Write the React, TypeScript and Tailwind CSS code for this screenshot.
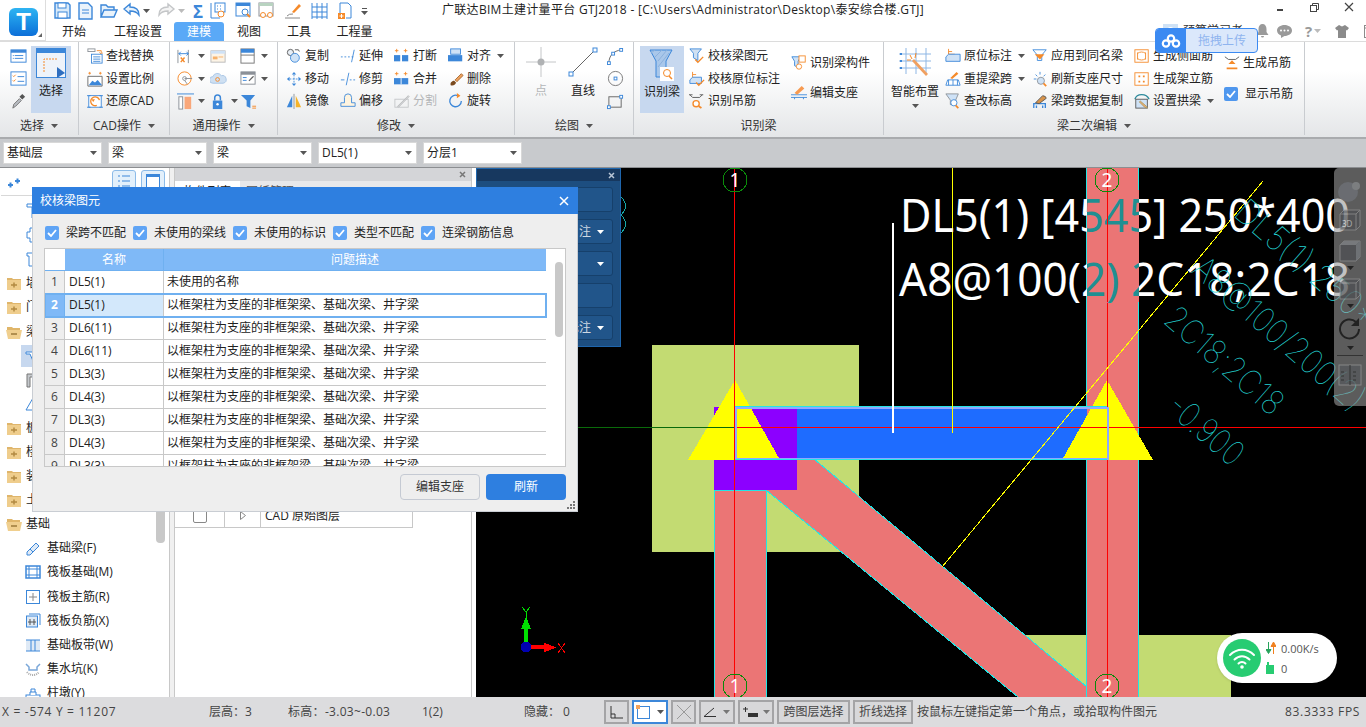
import React from "react";

const B = "#3c87d9", O = "#f58a2a", G = "#8b9097", L = "#cfe2f6";

const icons: Record<string, React.ReactNode> = {
  list1: <><rect x="1" y="2" width="16" height="13" fill="#fff" stroke={B} /><rect x="1" y="2" width="16" height="3" fill={B} /><path d="M5 8h9M5 11h9" stroke={B} /><path d="M3 8h1M3 11h1" stroke={B} /></>,
  list2: <><rect x="1" y="2" width="16" height="14" fill="#fff" stroke={B} /><path d="M3 6l1 1 2-2M3 11l1 1 2-2" stroke={O} fill="none" /><path d="M8 7h7M8 12h7" stroke={B} /></>,
  dropper: <><path d="M3 16l1-4 6-6 2 2-6 6z" fill="#b8bcc2" stroke="#777" /><path d="M10 4l3-3 3 3-3 3z" fill="#555" /></>,
  find: <><rect x="1" y="1" width="8" height="3" fill="none" stroke={G} /><path d="M11 3h5v3M14 5l2 2 2-2" stroke={O} fill="none" /><rect x="5" y="7" width="12" height="10" fill="#fff" stroke={B} /><path d="M7 10h8M7 12.500h8M7 15h8" stroke={B} /></>,
  ratio: <><path d="M1 6h16v11H1z" fill="#fff" stroke="#666" /><path d="M2 16l4-5 3 2 3-3 5 6z" fill={B} /><path d="M3 1v3M1.500 2.500h3M15 1v3M13.500 2.500h3" stroke={O} /></>,
  restore: <><rect x="2" y="3" width="14" height="13" fill="#fff" stroke={B} /><path d="M0 3h4M0 16h4M14 3h4M14 16h4" stroke={B} /><path d="M14 8a5 5 0 1 0-3 6" stroke={O} fill="none" strokeWidth="1.500" /><path d="M5 7l2 3 2-3z" fill={O} /></>,
  ext: <><path d="M1 2v14M12 2v14" stroke={G} /><path d="M2 6h10M2 6l2-2M2 6l2 2M12 6l-2-2M12 6l-2 2" stroke={B} fill="none" /><path d="M4 10l4 5M8 10l-4 5" stroke={O} strokeWidth="1.500" /></>,
  panel: <><rect x="1" y="3" width="15" height="12" fill="#fdf4e6" stroke="#bbb" /><path d="M1 3h15v3H1z" fill={L} /><rect x="3" y="9" width="5" height="3" fill="#f7b26c" /><rect x="9" y="9" width="5" height="1" fill="#f7b26c" /></>,
  win: <><rect x="1" y="1" width="14" height="15" fill="#fff" stroke="#777" /><rect x="1" y="1" width="14" height="4" fill={B} /><rect x="1" y="7" width="14" height="1" fill="#777" /></>,
  clock: <><circle cx="8" cy="9" r="7" fill="#fff" stroke={O} /><circle cx="8" cy="9" r="2" fill="none" stroke={G} /><path d="M8 9h8" stroke={G} /><path d="M8 11l3 4" stroke={G} /></>,
  cloud: <><path d="M3 14a3.500 3.500 0 0 1 0-7 5 5 0 0 1 9-1 4 4 0 0 1 2 8z" fill="#cfe0f2" stroke="#a8c6e6" /><circle cx="8" cy="10" r="2" fill="none" stroke={O} /></>,
  props: <><rect x="1" y="2" width="15" height="13" fill="#fff" stroke={G} /><rect x="1" y="2" width="15" height="3" fill={G} /><path d="M3 8h4M3 11h4" stroke={B} /><path d="M9 11l4-4 2-1-1 2-4 4z" fill="#666" /></>,
  col: <><path d="M0 1h18" stroke={B} /><rect x="2" y="4" width="4" height="13" fill="#fff" stroke={G} /><rect x="8" y="4" width="7" height="13" fill="#f9a77a" /></>,
  lock: <><path d="M5 8V5a3 3 0 0 1 6 0v3" fill="none" stroke={B} strokeWidth="1.600" /><rect x="3" y="8" width="10" height="9" fill={B} /><circle cx="8" cy="12" r="1.300" fill="#fff" /></>,
  funnel: <><path d="M1 2h15l-5 6v8l-4-2V8z" fill={B} /><path d="M13 14h4M13 16h4" stroke={O} /></>,
  copy: <><circle cx="5" cy="5" r="3.500" fill="#e8eef5" stroke="#555" /><circle cx="10" cy="11" r="5" fill={L} stroke={B} /><path d="M10 2h4l1 2" stroke="#555" fill="none" /></>,
  extend: <path d="M1 10h2M5 10h2M9 10h2M13 10h2M16 2l-3 14" stroke={B} fill="none" />,
  brk: <><path d="M3 1v4M1 3h4M13 1v4M11 3h4" stroke={O} /><rect x="0" y="8" width="7" height="7" fill={B} /><rect x="9" y="8" width="7" height="7" fill={B} /></>,
  merge: <><path d="M3 1v4M1 3h4M13 1v4M11 3h4" stroke={O} /><rect x="0" y="8" width="16" height="7" fill={B} /><path d="M8 8v7" stroke="#fff" /></>,
  align: <><rect x="3" y="1" width="11" height="6" fill={L} stroke={B} /><rect x="0" y="8" width="16" height="7" fill={B} /></>,
  move: <><path d="M9 1l2.500 3h-5zM9 17l2.500-3h-5zM1 9l3 2.500v-5zM17 9l-3 2.500v-5z" fill={B} /><path d="M9 4v10M4 9h10" stroke={B} strokeDasharray="2 1.500" /></>,
  trim: <path d="M1 10h4M11 10h2M15 10h2M10 2l-3 14" stroke={B} fill="none" />,
  del: <><path d="M3 16c-1-3 2-5 4-5l2 2c0 2-3 4-6 3z" fill="#7a4a1e" /><path d="M8 10l7-7 2 2-7 7z" fill="#eda15e" stroke="#a5652c" /></>,
  mirror: <><path d="M7 3v13H1z" fill={B} /><path d="M9 1v17" stroke={G} /><path d="M11 3v13h6z" fill="#f5b32a" /></>,
  offset: <path d="M1 15v-4h4V5a4 4 0 0 1 8 0v6h4v4z" fill="#fff4df" stroke={B} />,
  split: <><rect x="1" y="7" width="15" height="9" fill="none" stroke="#c4c6c8" /><path d="M4 15L16 3l1 1L5 16z" fill="#d8d9da" stroke="#b8babc" /></>,
  rotate: <><path d="M15 9a6.500 6.500 0 1 1-4-6" fill="none" stroke={B} strokeWidth="1.500" /><path d="M10 0l4 3-4 3z" fill={O} /></>,
  arc: <><path d="M2 16C2 8 7 3 15 2" fill="none" stroke="#666" /><rect x="0.500" y="14.500" width="3" height="3" fill="#fff" stroke={B} /><rect x="13.500" y="0.500" width="3" height="3" fill="#fff" stroke={B} /><rect x="5" y="4.500" width="3" height="3" fill="#fff" stroke={B} /></>,
  circle: <><circle cx="9" cy="9" r="7.500" fill="none" stroke="#777" /><rect x="7.500" y="7.500" width="3" height="3" fill="#fff" stroke={B} /></>,
  rect: <><rect x="2" y="4" width="13" height="11" fill="none" stroke="#666" /><rect x="0.500" y="13.500" width="3" height="3" fill="#fff" stroke={B} /><rect x="13.500" y="2.500" width="3" height="3" fill="#fff" stroke={B} /></>,
  chk1: <><path d="M1 1h13l-4 5v8l-5-3V6z" fill="#cfe0f2" stroke={B} /><path d="M7 13l3 3 6-6" stroke={O} fill="none" strokeWidth="1.500" /></>,
  chk2: <><path d="M4 1v7h8M4 4h4" stroke={O} fill="none" /><path d="M1 10l3-3h10v7H1z" fill={L} stroke={B} /><path d="M8 13l3 3 6-6" stroke={O} fill="none" strokeWidth="1.500" /></>,
  hang: <><path d="M1 2l3 3h8l3-3M0 2h4M12 2h4" stroke="#555" fill="none" /><circle cx="8" cy="12" r="3.500" fill="#fff" stroke={O} strokeWidth="1.500" /><path d="M11 15l3 2" stroke={O} strokeWidth="2" /></>,
  beamc: <><path d="M1 2h10l-3 5v7l-4-2V7z" fill={L} stroke={B} /><rect x="9" y="1" width="7" height="7" fill="#fff" stroke={O} /><circle cx="9" cy="13" r="3" fill="#fff" stroke={O} /></>,
  seat: <><path d="M0 11h18M0 14h18" stroke={B} /><path d="M4 16v-2M14 16v-2" stroke={B} /><path d="M4 9l8-8 3 3-8 7z" fill="#f79a50" /></>,
  apply: <><path d="M1 2h15l-5 6v6H6V8z" fill="#fff" stroke={B} /><path d="M3 7h11l-5 6z" fill={O} /></>,
  ori: <><path d="M4 1v6h7M4 4h4" stroke={O} fill="none" /><path d="M1 10l3-3h13v8H1z" fill={L} stroke={B} /></>,
  refetch: <><path d="M3 10h12l2 6H1z" fill="#fff" stroke={B} /><path d="M4 16v-6M9 16v-6M14 16v-6" stroke={B} /><path d="M6 8l7-7 2 2-7 6z" fill={O} /></>,
  elev: <><path d="M1 1h14l-3 7v5H6V8z" fill={L} stroke={G} /><circle cx="10" cy="11" r="3.500" fill="#fff" stroke={B} /><path d="M12 14l3 3" stroke={O} strokeWidth="2" /></>,
  fresh: <><circle cx="10" cy="11" r="4" fill={L} stroke={G} /><path d="M13 14l3 3" stroke={O} strokeWidth="2" /><path d="M9 1v3M2 9h3M4 4l2 2M15 4l-2 2" stroke={B} /></>,
  brush: <><path d="M2 17v-5h13v5M5 17v-3M12 17v-3" fill="none" stroke={B} strokeWidth="1.500" /><path d="M4 11l8-8 3 1 1 2-8 6z" fill="#d8934a" stroke="#555" /></>,
  side: <><rect x="1" y="2" width="15" height="14" fill="#fff" stroke={O} /><path d="M4 6c3-2 6-2 9 0M4 12c3 2 6 2 9 0M4 5v8M13 5v8" stroke={O} fill="none" /></>,
  erect: <><rect x="1" y="2" width="15" height="14" fill="#fff" stroke={O} /><path d="M5 5h2v2H5zM10 5h2v2h-2zM5 11h2v2H5zM10 11h2v2h-2z" fill={O} /></>,
  arch: <><path d="M1 7C3 0 14 0 17 7" fill="none" stroke="#2d8a9c" strokeWidth="1.500" /><rect x="2" y="7" width="13" height="10" fill={L} stroke="#555" /><path d="M7 9l7 6 1 2-3-1-6-6z" fill="#f0b070" stroke="#a96" /></>,
  hang2: <><path d="M1 2l4 3h8l4-3" stroke="#555" fill="none" /><path d="M5 10l4-4 4 4zM3 14h12v2H3z" fill={O} /></>,
  save: <><path d="M1 1h13l2 2v13H1z" fill="#d9eaf9" stroke={B} strokeWidth="1.400" /><rect x="4" y="1" width="8" height="5" fill="#fff" stroke={B} /><rect x="4" y="10" width="9" height="6" fill="#fff" stroke={B} /></>,
  doc: <><path d="M2 1h9l4 4v12H2z" fill="#eaf3fb" stroke={B} strokeWidth="1.400" /><path d="M5 8h7M5 11h7" stroke={B} /></>,
  open: <path d="M1 15V3h5l2 2h6v3M1 15l3-7h13l-3 7z" fill="#eaf3fb" stroke={B} strokeWidth="1.400" />,
  undo: <path d="M1 7l6-5v3c5 0 9 2 9 8-2-3-5-4-9-4v3z" fill="#eaf3fb" stroke={B} strokeWidth="1.400" />,
  redo: <path d="M16 7l-6-5v3c-5 0-9 2-9 8 2-3 5-4 9-4v3z" fill="#f4f4f4" stroke="#c4c6c8" strokeWidth="1.400" />,
  q1: <><path d="M1 1v15h9" fill="none" stroke={B} /><rect x="5" y="1" width="10" height="9" fill="#fff" stroke={B} /><path d="M7 4h1M10 4h1M7 7h1M10 7h1" stroke={B} /><circle cx="11" cy="12" r="3" fill="#fff" stroke={O} /></>,
  q2: <><rect x="1" y="1" width="14" height="13" fill="#fff" stroke={B} /><rect x="1" y="1" width="14" height="3" fill={B} /><circle cx="10" cy="10" r="3" fill="#fff" stroke={B} /><path d="M12 12l3 3" stroke={O} strokeWidth="2" /></>,
  q3: <><rect x="1" y="1" width="14" height="13" fill="#fff" stroke={G} /><rect x="1" y="1" width="14" height="3" fill="#b8d3c0" /><circle cx="5" cy="13" r="2.500" fill="#fff" stroke={O} /><circle cx="12" cy="13" r="2.500" fill="#fff" stroke={O} /></>,
  q4: <><path d="M8 10l7-8 2 2-7 7z" fill={O} /><path d="M1 16h15" stroke="#888" /><path d="M3 14a6 4 0 0 1 6-2" stroke="#888" fill="none" /></>,
  q5: <path d="M1 1v16M16 1v16M1 5h15M1 10h15M1 15h15M6 1v16M11 1v16" stroke={B} fill="none" />,
  q6: <><path d="M3 12V1h8l3 3v12H9" fill="#fff" stroke={B} /><rect x="1" y="11" width="7" height="6" fill={O} /><path d="M4.500 12v4M2.500 14h4" stroke="#fff" /></>,
};

function Ic({ n, s = 18 }: { n: string; s?: number }) {
  return <svg width={s} height={s} viewBox="0 0 18 18" className="shrink-0 block">{icons[n]}</svg>;
}

function Caret({ c = "#555" }: { c?: string }) {
  return <svg width="7" height="4" viewBox="0 0 7 4" className="shrink-0"><path d="M0 0h7L3.500 4z" fill={c} /></svg>;
}

function Item({ n, t, caret, gray, w = "" }: { n: string; t: string; caret?: boolean; gray?: boolean; w?: string }) {
  return (
    <div className={"flex items-center h-[22.5px] whitespace-nowrap " + w}>
      <div className="w-[19px] shrink-0"><Ic n={n} s={16} /></div>
      <span className={gray ? "text-[#b4b6b8]" : "text-[#222]"}>{t}</span>
      {caret && <span className="ml-[6px] flex"><Caret /></span>}
    </div>
  );
}

function Group({ cls, label, caret = true, children }: { cls: string; label: string; caret?: boolean; children: React.ReactNode }) {
  return (
    <div className={"flex flex-col shrink-0 border-r border-[#c9ccd0] mb-[2px] " + cls}>
      <div className="flex h-[71px] mt-[3px] shrink-0">{children}</div>
      <div className="flex items-center justify-center gap-[7px] h-[19px] shrink-0 text-[#333]">
        <span>{label}</span>{caret && <Caret />}
      </div>
    </div>
  );
}

function Mini({ n, caret }: { n: string; caret?: boolean }) {
  return (
    <div className="flex items-center h-[22.5px] gap-[4px]"><Ic n={n} s={17} />{caret && <Caret />}</div>
  );
}

function Folder({ open }: { open?: boolean }) {
  return (
    <svg width="16" height="14" viewBox="0 0 16 14" className="shrink-0">
      {open ? <><path d="M1 2h5l1 1h7v3H1z" fill="#e0b66a" /><path d="M0 5h16l-2 9H2z" fill="#f0cf8e" /><path d="M5 9h6" stroke="#9c7a3a" strokeWidth="1.500" /></>
        : <><path d="M1 2h5l1 1h8v2H1z" fill="#dfb56b" /><rect x="1" y="4" width="14" height="10" fill="#efcd8c" /><path d="M5 9h6M8 6.500v5" stroke="#b38a42" strokeWidth="1.500" /></>}
    </svg>
  );
}

const sub: Record<string, React.ReactNode> = {
  a: <path d="M2 1h12v3H9v11H7V4H2z" fill="#fff" stroke={B} />,
  b: <path d="M5 1h6v4h3v6h-3v4H5v-4H2V5h3z" fill="#fff" stroke={B} />,
  c: <path d="M2 2h12v3h-2v10H4V5H2z" fill="#fff" stroke={B} />,
  d: <><path d="M1 4h14v2h-4L8 13 5 6H1z" fill="#fff" stroke={B} /></>,
  e: <path d="M2 2h12v3H5v10H2z" fill="#c4c8cc" stroke="#777" />,
  f: <path d="M8 2l7 12H1z" fill="#fff" stroke={B} />,
  g: <><path d="M2 12L11 3l3 3-9 9H2z" fill="#dfeaf6" stroke={B} /><path d="M5 9l3 3" stroke={B} /></>,
  h: <><rect x="1" y="2" width="14" height="12" fill="#fff" stroke={B} strokeWidth="1.500" /><path d="M1 5h14M1 11h14M4 2v12M12 2v12" stroke={B} /></>,
  i: <><rect x="1.500" y="1.500" width="13" height="13" fill="#fff" stroke={B} /><path d="M8 4v8M4 8h8" stroke="#888" /></>,
  j: <><rect x="1.500" y="3" width="11" height="11" fill="#dfeaf6" stroke={B} /><path d="M4 1h11v11" fill="none" stroke={B} /><path d="M5 6v6M9 6v6M3 9h8" stroke="#555" /></>,
  k: <><rect x="1" y="3" width="14" height="11" fill="#dfeaf6" /><path d="M1 3h14M1 14h14M6 3v11M10 3v11" stroke={B} /></>,
  l: <><path d="M1 3l3 3v3h8V6l3-3" fill="none" stroke="#7aa7d9" strokeWidth="1.500" /><path d="M2 11c3 4 9 4 12 0" fill="none" stroke="#aaa" strokeDasharray="1 1" strokeWidth="2" /></>,
  m: <><rect x="1" y="10" width="14" height="4" fill="#fff" stroke={B} /><path d="M5 10V7h6v3M6 7V4h4v3" fill="#fff" stroke={B} /></>,
};

function TreeFolder({ t, open }: { t: string; open?: boolean }) {
  return <div className="flex items-center h-[24.1px] pl-[5px] gap-[4px] whitespace-nowrap"><Folder open={open} /><span>{t}</span></div>;
}
function TreeSub({ n, t, sel }: { n: string; t: string; sel?: boolean }) {
  return (
    <div className="flex items-center h-[24.1px] whitespace-nowrap pl-[20px]">
      <div className={"flex items-center h-[22px] pl-[4px] pr-[6px] gap-[6px] " + (sel ? "bg-[#c7d8ef]" : "")}>
        <svg width="16" height="16" viewBox="0 0 16 16" className="shrink-0">{sub[n]}</svg><span>{t}</span>
      </div>
    </div>
  );
}

const rows = [
  ["DL5(1)", "未使用的名称"],
  ["DL5(1)", "以框架柱为支座的非框架梁、基础次梁、井字梁"],
  ["DL6(11)", "以框架柱为支座的非框架梁、基础次梁、井字梁"],
  ["DL6(11)", "以框架柱为支座的非框架梁、基础次梁、井字梁"],
  ["DL3(3)", "以框架柱为支座的非框架梁、基础次梁、井字梁"],
  ["DL4(3)", "以框架柱为支座的非框架梁、基础次梁、井字梁"],
  ["DL3(3)", "以框架柱为支座的非框架梁、基础次梁、井字梁"],
  ["DL4(3)", "以框架柱为支座的非框架梁、基础次梁、井字梁"],
  ["DL3(3)", "以框架柱为支座的非框架梁、基础次梁、井字梁"],
];

function Check({ t, cls }: { t: string; cls: string }) {
  return (
    <div className={"flex items-center shrink-0 " + cls}>
      <span className="w-[14px] h-[14px] rounded-[2px] bg-[#5fa4f5] flex items-center justify-center shrink-0">
        <svg width="10" height="8" viewBox="0 0 10 8"><path d="M1 4l3 3 5-6" fill="none" stroke="#fff" strokeWidth="1.800" /></svg>
      </span>
      <span className="ml-[7px] whitespace-nowrap">{t}</span>
    </div>
  );
}

function Dialog() {
  return (
    <div className="absolute left-[32px] top-[187px] w-[546px] h-[325px] bg-[#eeeeee] border border-[#c9cdd3] border-t-0 flex flex-col text-[#222]">
      <div className="h-[27px] shrink-0 bg-[#2e7fe0] flex items-center justify-between pl-[8px] pr-[9px] text-white -mx-[1px]">
        <span>校核梁图元</span>
        <svg width="10" height="10" viewBox="0 0 10 10"><path d="M1 1l8 8M9 1L1 9" stroke="#fff" strokeWidth="1.500" /></svg>
      </div>
      <div className="h-[34px] shrink-0 flex items-center pl-[12px] pt-[4px]">
        <Check t="梁跨不匹配" cls="w-[88px]" />
        <Check t="未使用的梁线" cls="w-[100px]" />
        <Check t="未使用的标识" cls="w-[100px]" />
        <Check t="类型不匹配" cls="w-[88px]" />
        <Check t="连梁钢筋信息" cls="w-[100px]" />
      </div>
      <div className="ml-[11px] w-[522px] h-[219px] shrink-0 border border-[#c8c8c8] bg-white relative overflow-hidden">
        <div className="flex h-[22px] border-b border-[#6fb0f0] w-[501px]">
          <div className="w-[20px] bg-white" />
          <div className="w-[99px] bg-[#7fb9f7] text-white text-center leading-[21px] border-r border-[#6fb0f0]">名称</div>
          <div className="flex-1 bg-[#7fb9f7] text-white text-center leading-[21px]">问题描述</div>
        </div>
        {rows.map((r, i) => (
          <div key={i} className={"flex h-[23px] w-[501px] border-b leading-[22px] " + (i === 1 ? "border-[#6fb0f0] outline-2 -outline-offset-1 outline-[#6fb0f0] relative" : "border-[#c8c8c8]")}>
            <div className={"w-[20px] text-center border-r " + (i === 1 ? "bg-[#7fb9f7] text-white font-bold border-[#6fb0f0]" : "bg-[#eeeeee] border-[#c8c8c8] text-[#444]")}>{i + 1}</div>
            <div className={"w-[99px] pl-[4px] border-r border-[#c8c8c8] " + (i === 1 ? "bg-[#d3e8fb]" : "")}>{r[0]}</div>
            <div className="flex-1 pl-[3px]">{r[1]}</div>
          </div>
        ))}
        <div className="absolute left-[510px] top-[13px] w-[8px] h-[75px] rounded-[4px] bg-[#c8c8c8]" />
      </div>
      <div className="flex justify-end gap-[6px] pr-[11px] pt-[7px]">
        <button className="w-[80px] h-[26px] rounded-[4px] border border-[#c5cad3] text-[#333]">编辑支座</button>
        <button className="w-[80px] h-[26px] rounded-[4px] bg-[#2e7fe0] text-white">刷新</button>
      </div>
      <svg width="10" height="10" viewBox="0 0 10 10" className="absolute right-[1px] bottom-[1px]">
        <path d="M7 1h2v2H7zM4 4h2v2H4zM7 4h2v2H7zM1 7h2v2H1zM4 7h2v2H4zM7 7h2v2H7z" fill="#777" />
      </svg>
    </div>
  );
}

function BluePanel() {
  const cells = [["", false], ["注", true], ["", true], ["", false], ["标注", true]] as const;
  return (
    <div className="absolute left-[476px] top-[168px] w-[145px] h-[179px] bg-[#1d4e80] border border-[#1f66ad] text-[#cfd8e3] flex flex-col">
      <div className="h-[12px] bg-[#17385f] flex items-center justify-end pr-[5px] shrink-0">
        <svg width="7" height="7" viewBox="0 0 7 7"><path d="M1 1l5 5M6 1L1 6" stroke="#b9c6d6" strokeWidth="1.500" /></svg>
      </div>
      <div className="flex flex-col gap-[7px] pt-[6px] pl-[2px] pr-[7px]">
        {cells.map((c, i) => (
          <div key={i} className="h-[25px] rounded-[3px] border border-[#16406b] bg-[#21558a] flex items-center justify-end pr-[8px] gap-[6px]">
            <span>{c[0]}</span>{c[1] && <Caret c="#fff" />}
          </div>
        ))}
      </div>
    </div>
  );
}

function Axis({ x, y, t }: { x: number; y: number; t: string }) {
  return (
    <g>
      <circle cx={x} cy={y} r="12" fill="none" stroke="#0a8a0a" />
      <text x={x} y={y + 7} textAnchor="middle" fontSize="19" fill="#fff" fontFamily="'Noto Sans',sans-serif">{t}</text>
    </g>
  );
}

function Canvas() {
  const cs = "'Noto Sans',sans-serif";
  const l1 = "DL5(1) [4545] 250*400";
  const l2 = "A8@100(2) 2C18;2C18";
  return (
    <div className="relative flex-1 bg-black overflow-hidden">
      <svg width="890" height="529" viewBox="476 168 890 529" className="block" shapeRendering="crispEdges">
        <defs>
          <clipPath id="col2"><rect x="1087" y="167" width="52" height="530" /></clipPath>
        </defs>
        <rect x="652" y="345" width="207" height="207" fill="#c3db72" />
        <rect x="1026" y="635" width="205" height="62" fill="#c3db72" />
        <polygon points="797,459 814,459 1087,687 1087,697 1018,697 766,490 797,490" fill="#eb7575" />
        <path d="M814 459L1087 687M766 490L1018 697" stroke="#22e6e6" fill="none" />
        <rect x="714.500" y="490.500" width="52" height="207" fill="#eb7575" stroke="#22e6e6" />
        <rect x="1087" y="167" width="52" height="530" fill="#eb7575" />
        <path d="M1086.500 167V697M1138.500 167V697" stroke="#22e6e6" />
        <rect x="714" y="407" width="83" height="83" fill="#8c00ff" />
        <rect x="797" y="407" width="290" height="52" fill="#1e6cff" />
        <path d="M1087 697h82" stroke="#a000d0" />
        <polygon points="735,380 780,460 688,460" fill="#ffff00" />
        <polygon points="1107,380 1153,460 1062,460" fill="#ffff00" />
        <path d="M476 427.500H735" stroke="#0a6a0a" />
        <path d="M735 427.500H1366" stroke="#ff0000" />
        <path d="M734.500 167V697M1107.500 167V697" stroke="#ff0000" />
        <rect x="735.500" y="407.500" width="372" height="51" fill="none" stroke="#8fa8ff" strokeWidth="2" />
        <path d="M735 406.500H1107M735 459.500H1107" stroke="#22e6e6" />
        <path d="M952.500 167V433" stroke="#ffff00" />
        <path d="M893 223V433" stroke="#fff" strokeWidth="2" />
        <path d="M942 567L1263 181" stroke="#ffff00" />
        <g fontFamily={cs} fontSize="45" fill="#fff">
          <text x="900" y="232" textLength="450" lengthAdjust="spacingAndGlyphs">{l1}</text>
          <text x="899" y="296" textLength="451" lengthAdjust="spacingAndGlyphs">{l2}</text>
        </g>
        <g clipPath="url(#col2)" fontFamily={cs} fontSize="45" fill="#1f8f92">
          <rect x="1087" y="190" width="52" height="112" fill="#eb7575" />
          <text x="900" y="232" textLength="450" lengthAdjust="spacingAndGlyphs">{l1}</text>
          <text x="899" y="296" textLength="451" lengthAdjust="spacingAndGlyphs">{l2}</text>
          <path d="M1107.500 190V302" stroke="#ff0000" />
        </g>
        <g fontFamily="Inter,'Liberation Sans',sans-serif" fontSize="34" fontWeight="100" fill="#22d0d0">
          <text x="1232" y="215" textLength="232" lengthAdjust="spacingAndGlyphs" transform="rotate(41 1232 215)">DL5(1) 250*400</text>
          <text x="1190" y="272" textLength="215" lengthAdjust="spacingAndGlyphs" transform="rotate(41 1190 272)">A8@100/200(2)</text>
          <text x="1162" y="322" textLength="145" lengthAdjust="spacingAndGlyphs" transform="rotate(41 1162 322)">2C18;2C18</text>
          <text x="1165" y="410" textLength="88" lengthAdjust="spacingAndGlyphs" transform="rotate(41 1165 410)">-0.900</text>
        </g>
        <path d="M621 197c6 6 6 12 0 18c6 6 6 12 0 18" fill="none" stroke="#16a8a8" />
        <Axis x={735} y={180} t="1" />
        <Axis x={1107} y={180} t="2" />
        <Axis x={735} y={686} t="1" />
        <Axis x={1107} y={686} t="2" />
        <path d="M526 647V620" stroke="#00e000" strokeWidth="4" />
        <path d="M526 617l5 12h-10z" fill="#00e000" />
        <path d="M522 607l4 5 4-5M526 612v6" stroke="#00e000" fill="none" />
        <path d="M526 647H548" stroke="#ff0000" strokeWidth="4" />
        <path d="M556 647.500l-12 5v-10z" fill="#ff0000" />
        <path d="M558 643l7 10M565 643l-7 10" stroke="#ff0000" fill="none" />
        <circle cx="526" cy="647" r="5.500" fill="#0000b0" />
      </svg>

      <div className="absolute right-0 top-0 w-[32px] h-[238px] rounded-l-[5px] bg-[#999999]/60 flex flex-col items-center pt-[11px]">
        <svg width="26" height="24" viewBox="0 0 26 24" className="opacity-70"><circle cx="11" cy="13" r="10" fill="#70747a" /><circle cx="19" cy="7" r="4" fill="#8a8d90" /></svg>
        <svg width="24" height="24" viewBox="0 0 24 24" className="mt-[5px] opacity-60"><path d="M2 6l4-4h16v16l-4 4H2z" fill="#4a4d52" stroke="#999" /><path d="M2 6h16v16M18 6l4-4" fill="none" stroke="#999" /><text x="4" y="19" fontSize="8" fill="#ddd" fontFamily="'Noto Sans',sans-serif">3D</text></svg>
        <svg width="24" height="24" viewBox="0 0 24 24" className="mt-[7px] opacity-60"><path d="M2 6l4-4h16v16l-4 4H2z" fill="#4a4d52" stroke="#999" /><path d="M18 6l4-4v16l-4 4z" fill="#7b8087" /><path d="M2 6l4-4h16l-4 4z" fill="#8a8d92" /></svg>
        <span className="mt-[3px] flex"><Caret c="#222" /></span>
        <svg width="24" height="24" viewBox="0 0 24 24" className="mt-[7px] opacity-60"><path d="M2 6l4-4h16v16l-4 4H2z" fill="#4a4d52" stroke="#999" /><path d="M18 6v16M2 6h16l4-4" fill="none" stroke="#999" /></svg>
        <span className="mt-[3px] flex"><Caret c="#222" /></span>
        <svg width="24" height="24" viewBox="0 0 24 24" className="mt-[9px]"><path d="M21 12a9.500 9.500 0 1 1-3-7" fill="none" stroke="#222" strokeWidth="2" /><path d="M21 1v8h-8z" fill="#222" /></svg>
        <span className="mt-[5px] flex"><Caret c="#222" /></span>
        <div className="w-[26px] h-px bg-[#333] mt-[5px]" />
        <svg width="24" height="22" viewBox="0 0 24 22" className="mt-[8px] opacity-70"><rect x="1" y="1" width="22" height="20" fill="#55585c" stroke="#999" /><path d="M12 1v20M3 8h3M3 12h3M3 16h3M15 8h3M15 12h3M15 16h3" stroke="#222" /></svg>
      </div>

      <div className="absolute left-[741px] top-[465px] w-[120px] h-[50px] rounded-full bg-white shadow flex items-center pl-[6px] text-[#555]">
        <div className="w-[38px] h-[38px] rounded-full bg-[#27cc72] flex items-center justify-center shrink-0">
          <svg width="28" height="24" viewBox="0 0 28 24"><path d="M2 9c7-7 17-7 24 0M6.500 13.500c4.500-4.500 10.500-4.500 15 0M10.500 17.500c2-2 5-2 7 0" fill="none" stroke="#fff" strokeWidth="2" strokeLinecap="round" /><circle cx="14" cy="21" r="1.800" fill="#fff" /></svg>
        </div>
        <div className="ml-[5px] flex flex-col gap-[5px] text-[11px] leading-[15px]">
          <div className="flex items-center gap-[5px]"><svg width="10" height="12" viewBox="0 0 10 12"><path d="M2.500 0v8M0 7.500h5L2.500 11.500z" fill="#27a35c" stroke="#27a35c" /><path d="M7.500 12V3M5 4.500h5L7.500 0z" fill="#f08020" stroke="#f08020" /></svg><span>0.00K/s</span></div>
          <div className="flex items-center gap-[5px]"><svg width="9" height="12" viewBox="0 0 9 12"><rect x="0" y="3" width="8" height="9" fill="#27cc72" /><rect x="1" y="0" width="2" height="3" fill="#27cc72" /></svg><span className="ml-[1px]">0</span></div>
        </div>
      </div>
    </div>
  );
}

function StatBtn({ cls = "", children }: { cls?: string; children: React.ReactNode }) {
  return <div className={"h-[24px] border-2 flex items-center justify-center shrink-0 text-[#444] " + cls}>{children}</div>;
}
const SB = "border-[#a4a4a6] bg-[#d8d8da] ";

export default function App() {
  return (
    <div className="relative w-[1366px] h-[727px] overflow-hidden flex flex-col bg-white text-[12px] leading-[16px] text-[#222] [font-family:'Open_Sans','Noto_Sans_CJK_SC',sans-serif]">
      {/* title + tabs */}
      <div className="relative h-[41px] shrink-0 flex">
        <div className="w-[46px] h-[41px] border-r border-b border-[#dddddd] relative shrink-0">
          <div className="absolute left-[9px] top-[8px] w-[29px] h-[28px] rounded-[6px] bg-linear-to-b from-[#2fb4f2] to-[#0e6fd8] flex items-center justify-center text-white text-[24px] font-bold leading-none [font-family:'Liberation_Sans',sans-serif]">T</div>
          <span className="absolute right-[3px] bottom-[3px] w-0 h-0 border-l-[4px] border-l-transparent border-b-[4px] border-b-[#666]" />
        </div>
        <div className="flex-1 flex flex-col relative">
          <div className="h-[22px] flex items-center pl-[8px] gap-[5px]">
            <Ic n="save" /><Ic n="doc" /><Ic n="open" />
            <Ic n="undo" /><span className="-ml-[3px] flex"><Caret /></span>
            <span className="ml-[3px]"><Ic n="redo" /></span><span className="-ml-[3px] flex"><Caret c="#bbb" /></span>
            <span className="ml-[3px] text-[17px] leading-none font-bold text-[#3c87d9]">Σ</span>
            <span className="ml-[2px]"><Ic n="q1" /></span><span className="ml-[2px]"><Ic n="q2" /></span><Ic n="q3" /><span className="ml-[3px]"><Ic n="q4" /></span><span className="ml-[4px]"><Ic n="q5" /></span><span className="ml-[3px]"><Ic n="q6" /></span>
            <span className="ml-[1px] flex flex-col gap-[2px] items-center"><span className="w-[5px] h-px bg-[#555]" /><Caret /></span>
          </div>
          <div className="flex items-end h-[19px] text-[#222]">
            <div className="w-[56px] text-center leading-[19px]">开始</div>
            <div className="w-[72px] text-center leading-[19px]">工程设置</div>
            <div className="w-[50px] h-[19px] text-center leading-[19px] bg-[#5aa9f7] text-white rounded-t-[3px]">建模</div>
            <div className="w-[50px] text-center leading-[19px]">视图</div>
            <div className="w-[50px] text-center leading-[19px]">工具</div>
            <div className="w-[50px] text-center leading-[19px] pl-[11px]">工程量</div>
          </div>
        </div>
        <div className="absolute left-[442px] top-[2px] whitespace-nowrap text-[#222] tracking-[0.3px]">广联达BIM土建计量平台 GTJ2018 - [C:\Users\Administrator\Desktop\泰安综合楼.GTJ]</div>
        <div className="absolute right-[12px] top-[2px] flex items-center gap-[25px]">
          <span className="w-[6px] h-[2px] bg-[#444] mt-[6px] mr-[2px]" />
          <svg width="9" height="9" viewBox="0 0 9 9"><rect x="0.500" y="2.500" width="6" height="6" fill="none" stroke="#444" /><path d="M2.500 2.500v-2h6v6h-2" fill="none" stroke="#444" /></svg>
          <svg width="10" height="10" viewBox="0 0 10 10"><path d="M1 1l8 8M9 1L1 9" stroke="#444" strokeWidth="1.200" /></svg>
        </div>
        <div className="absolute left-[1163px] top-[22px] flex items-center h-[18px]">
          <svg width="15" height="15" viewBox="0 0 15 15"><rect width="15" height="15" fill="#cfe2f6" /><circle cx="7.500" cy="6" r="3" fill="#fff" /></svg>
          <span className="ml-[5px] text-[#333]">预算学习者</span>
        </div>
        <div className="absolute left-[1256px] top-[22px] flex items-center gap-[8px] h-[18px] text-[#9a9a9a]">
          <svg width="13" height="14" viewBox="0 0 13 14"><path d="M6.500 0C9 0 10.500 2 10.500 5v3l2 3H.5l2-3V5C2.500 2 4 0 6.500 0zM5 12h3a1.500 1.500 0 0 1-3 0z" fill="#9a9a9a" /></svg>
          <svg width="15" height="13" viewBox="0 0 15 13"><path d="M7.500 0c4 0 7.500 2.300 7.500 5.500S11.500 11 7.500 11L4 13v-2.500C2 10 0 8 0 5.500 0 2.300 3.500 0 7.500 0z" fill="#9a9a9a" /><circle cx="4" cy="5.500" r="1" fill="#fff" /><circle cx="7.500" cy="5.500" r="1" fill="#fff" /><circle cx="11" cy="5.500" r="1" fill="#fff" /></svg>
          <span className="text-[15px] font-bold ml-[5px]">?</span><span className="-ml-[6px] flex"><Caret c="#bbb" /></span>
          <svg width="14" height="13" viewBox="0 0 14 13" className="ml-[6px]"><path d="M4 0l3 1.500L10 0l4 3-2 2.500-1-.5v8H3V5l-1 .5L0 3z" fill="#8b8b8b" /></svg>
          <svg width="14" height="13" viewBox="0 0 14 13" className="ml-[7px]"><rect x="0.500" y="0.500" width="13" height="12" fill="none" stroke="#8b8b8b" /><path d="M0 3h14" stroke="#8b8b8b" /><path d="M7 5l3 3H8v3H6V8H4z" fill="#8b8b8b" /></svg>
        </div>
      </div>

      {/* ribbon */}
      <div className="h-[98px] shrink-0 flex border-t border-[#dcdcdc] bg-linear-to-b from-white from-30% to-[#e4e6e8] border-b-2 border-b-[#a9abae]">
        <Group cls="w-[79px]" label="选择">
          <div className="w-[31px] pl-[10px] flex flex-col">
            <Mini n="list1" /><Mini n="list2" /><Mini n="dropper" />
          </div>
          <div className="w-[40px] h-[67px] mt-px bg-[#c7d8ef] flex flex-col items-center">
            <svg width="30" height="30" viewBox="0 0 30 30" className="mt-[2px]"><rect x="0.500" y="0.500" width="29" height="29" fill="#eef3fa" stroke="#3c87d9" /><rect x="0" y="0" width="30" height="5" fill="#3c87d9" /><path d="M8 24V11h14" fill="none" stroke="#f58a2a" strokeDasharray="2 1" /><path d="M21 19l8 6-8 5z" fill="#2f6fc0" /></svg>
            <span className="mt-[5px]">选择</span>
          </div>
        </Group>
        <Group cls="w-[91px]" label="CAD操作">
          <div className="pl-[8px] flex flex-col">
            <Item n="find" t="查找替换" /><Item n="ratio" t="设置比例" /><Item n="restore" t="还原CAD" />
          </div>
        </Group>
        <Group cls="w-[108px]" label="通用操作">
          <div className="pl-[7px] grid grid-cols-[33px_30px_30px] grid-rows-[22.5px_22.5px_22.5px]">
            <Mini n="ext" caret /><Mini n="panel" /><Mini n="win" caret />
            <Mini n="clock" caret /><Mini n="cloud" /><Mini n="props" caret />
            <Mini n="col" caret /><Mini n="lock" caret /><Mini n="funnel" />
          </div>
        </Group>
        <Group cls="w-[237px]" label="修改">
          <div className="pl-[8px] grid grid-cols-[54px_54px_54px_60px] grid-rows-[22.5px_22.5px_22.5px]">
            <Item n="copy" t="复制" /><Item n="extend" t="延伸" /><Item n="brk" t="打断" /><Item n="align" t="对齐" caret />
            <Item n="move" t="移动" /><Item n="trim" t="修剪" /><Item n="merge" t="合并" /><Item n="del" t="删除" />
            <Item n="mirror" t="镜像" /><Item n="offset" t="偏移" /><Item n="split" t="分割" gray /><Item n="rotate" t="旋转" />
          </div>
        </Group>
        <Group cls="w-[119px]" label="绘图">
          <div className="w-[48px] ml-[2px] flex flex-col items-center text-[#b4b6b8]">
            <svg width="30" height="30" viewBox="0 0 30 30" className="mt-[2px]"><path d="M15 0v30M0 15h30" stroke="#c4c6c8" /><circle cx="15" cy="15" r="3.500" fill="#b0b2b4" /></svg>
            <span className="mt-[6px]">点</span>
          </div>
          <div className="w-[36px] flex flex-col items-center">
            <svg width="30" height="30" viewBox="0 0 30 30" className="mt-[2px]"><path d="M3 27L27 3" stroke="#666" /><rect x="1" y="25" width="4" height="4" fill="#fff" stroke="#3c87d9" /><rect x="25" y="1" width="4" height="4" fill="#fff" stroke="#3c87d9" /></svg>
            <span className="mt-[6px] whitespace-nowrap">直线</span>
          </div>
          <div className="flex flex-col pl-[6px]"><Mini n="arc" /><Mini n="circle" /><Mini n="rect" /></div>
        </Group>
        <Group cls="w-[250px]" label="识别梁" caret={false}>
          <div className="ml-[6px] w-[44px] h-[67px] mt-px bg-[#c7d8ef] flex flex-col items-center">
            <svg width="30" height="32" viewBox="0 0 30 32" className="mt-[3px]"><path d="M3 1h22l-6 11v16H9V12z" fill="#a9c7ea" stroke="#3c87d9" /><path d="M4 4L8 1M8 8l7-7M11 12l9-11M11 18l11-14" stroke="#8db1dc" /><rect x="13" y="18" width="14" height="14" fill="#fff" /><circle cx="20" cy="24" r="3.500" fill="#fff" stroke="#f58a2a" /><path d="M22 27l3 3" stroke="#f58a2a" strokeWidth="1.500" /></svg>
            <span className="mt-[3px]">识别梁</span>
          </div>
          <div className="ml-[5px] w-[102px] flex flex-col">
            <Item n="chk1" t="校核梁图元" /><Item n="chk2" t="校核原位标注" /><Item n="hang" t="识别吊筋" />
          </div>
          <div className="flex flex-col pt-[7px] gap-[7px]">
            <Item n="beamc" t="识别梁构件" /><Item n="seat" t="编辑支座" />
          </div>
        </Group>
        <Group cls="w-[421px]" label="梁二次编辑">
          <div className="ml-[6px] w-[50px] flex flex-col items-center">
            <svg width="34" height="32" viewBox="0 0 34 32" className="mt-[2px]"><path d="M8 1v26M18 1v26M28 1v26M1 7h32M1 14h32M1 21h32" stroke="#8db6e4" /><path d="M2 7h2M2 14h2M2 21h2" stroke="#3c87d9" strokeWidth="2" /><path d="M16 12l14 15-2 2-14-15z" fill="#f0a060" /><path d="M12 8l2 4M18 6l-1 5M9 13l4 0" stroke="#f58a2a" /></svg>
            <span className="mt-[5px] whitespace-nowrap">智能布置</span>
            <span className="mt-[4px] flex"><Caret /></span>
          </div>
          <div className="ml-[5px] w-[87px] flex flex-col">
            <Item n="ori" t="原位标注" caret /><Item n="refetch" t="重提梁跨" caret /><Item n="elev" t="查改标高" />
          </div>
          <div className="w-[102px] flex flex-col">
            <Item n="apply" t="应用到同名梁" /><Item n="fresh" t="刷新支座尺寸" /><Item n="brush" t="梁跨数据复制" />
          </div>
          <div className="w-[90px] flex flex-col">
            <Item n="side" t="生成侧面筋" /><Item n="erect" t="生成架立筋" /><Item n="arch" t="设置拱梁" caret />
          </div>
          <div className="flex flex-col pt-[7px] gap-[8px]">
            <Item n="hang2" t="生成吊筋" />
            <div className="flex items-center h-[23px]">
              <span className="w-[14px] h-[14px] rounded-[2px] bg-[#4f97ee] flex items-center justify-center"><svg width="10" height="8" viewBox="0 0 10 8"><path d="M1 4l3 3 5-6" fill="none" stroke="#fff" strokeWidth="1.800" /></svg></span>
              <span className="ml-[7px]">显示吊筋</span>
            </div>
          </div>
        </Group>
      </div>

      {/* select row */}
      <div className="h-[28px] shrink-0 bg-[#c8cacd] flex items-center pl-[3px] gap-[6px]">
        {["基础层", "梁", "梁", "DL5(1)", "分层1"].map((s, i) => (
          <div key={i} className="w-[99px] h-[22px] bg-white border border-[#d8d8d8] flex items-center justify-between pl-[3px] pr-[4px]">
            <span>{s}</span><Caret />
          </div>
        ))}
      </div>

      {/* main */}
      <div className="flex-1 flex min-h-0 border-t border-[#8c8e91]">
        <div className="w-[170px] shrink-0 border-r border-[#c8c8c8] flex flex-col overflow-hidden relative pl-px">
          <div className="h-[28px] shrink-0 border-b border-[#d8d8d8] flex items-center relative">
            <svg width="14" height="11" viewBox="0 0 14 11" className="ml-[6px] mt-[4px]"><path d="M1 7h5M3.500 4.500v5M8 3h5M10.500.5v5" stroke="#3c87d9" strokeWidth="2" /></svg>
            <div className="absolute left-[111px] top-[2px] w-[24px] h-[21px] rounded-[3px] border border-[#8cbbe8] bg-[#e3f0fb] flex items-center justify-center"><svg width="14" height="14" viewBox="0 0 14 14"><path d="M1 2h2M5 2h8M1 7h2M5 7h8M1 12h2M5 12h8" stroke="#3c87d9" /></svg></div>
            <div className="absolute left-[140px] top-[2px] w-[24px] h-[21px] rounded-[3px] border border-[#8cbbe8] bg-[#e3f0fb] flex items-center justify-center"><svg width="14" height="14" viewBox="0 0 14 14"><rect x="0.500" y="0.500" width="13" height="13" fill="#fff" stroke="#3c87d9" /><rect width="14" height="3" fill="#3c87d9" /></svg></div>
          </div>
          <div className="flex flex-col mt-[3px]">
            <TreeSub n="a" t="柱(Z)" /><TreeSub n="b" t="构造柱(Z)" /><TreeSub n="c" t="砌体柱(Z)" />
            <TreeFolder t="墙" /><TreeFolder t="门窗洞" /><TreeFolder t="梁" open />
            <TreeSub n="d" t="梁(L)" sel /><TreeSub n="e" t="连梁(G)" /><TreeSub n="f" t="圈梁(E)" />
            <TreeFolder t="板" /><TreeFolder t="楼梯" /><TreeFolder t="装修" /><TreeFolder t="土方" /><TreeFolder t="基础" open />
            <TreeSub n="g" t="基础梁(F)" /><TreeSub n="h" t="筏板基础(M)" /><TreeSub n="i" t="筏板主筋(R)" /><TreeSub n="j" t="筏板负筋(X)" /><TreeSub n="k" t="基础板带(W)" /><TreeSub n="l" t="集水坑(K)" /><TreeSub n="m" t="柱墩(Y)" />
          </div>
          <div className="absolute left-[156px] top-[40px] w-[9px] h-[335px] rounded-[4px] bg-[#c8c8c8]" />
        </div>
        <div className="w-[4px] shrink-0 bg-[#f0f0f0]" />
        <div className="w-[298px] shrink-0 border-l border-r border-[#c8c8c8] flex flex-col">
          <div className="h-[13px] bg-[#d4d5d8] flex items-center justify-end pr-[5px] shrink-0">
            <svg width="7" height="7" viewBox="0 0 7 7"><path d="M1 1l5 5M6 1L1 6" stroke="#777" strokeWidth="1.500" /></svg>
          </div>
          <div className="flex h-[22px] bg-[#e8e8ea] shrink-0 border-b border-[#d0d0d0]">
            <div className="w-[65px] bg-white text-center leading-[22px]">构件列表</div>
            <div className="w-[60px] text-center leading-[22px] text-[#555]">图纸管理</div>
          </div>
          <div className="w-[238px] mt-[301px] h-[24px] border-b border-r border-[#c8c8c8] flex items-center">
            <div className="w-[50px] h-full border-r border-[#c8c8c8] flex items-center justify-center"><span className="w-[14px] h-[14px] border border-[#888] rounded-[2px] bg-white" /></div>
            <div className="w-[36px] h-full border-r border-[#c8c8c8] flex items-center justify-center"><svg width="6" height="9" viewBox="0 0 6 9"><path d="M.5.500l5 4-5 4z" fill="#fff" stroke="#888" /></svg></div>
            <span className="pl-[4px]">CAD 原始图层</span>
          </div>
        </div>
        <div className="w-[4px] shrink-0 bg-white" />
        <Canvas />
      </div>

      {/* status */}
      <div className="h-[30px] shrink-0 bg-[#dcdcde] flex items-center text-[#444] whitespace-nowrap relative">
        <span className="ml-[2px] w-[207px] tracking-[0.7px]">X = -574 Y = 11207</span>
        <span className="w-[79px]">层高：3</span>
        <span className="w-[134px] tracking-[0.3px]">标高：-3.03~-0.03</span>
        <span className="w-[102px]">1(2)</span>
        <span className="w-[80px]">隐藏： 0</span>
        <div className="flex items-center gap-[3px]">
          <StatBtn cls={SB + "w-[25px]"}><svg width="13" height="13" viewBox="0 0 13 13"><path d="M1 0v12h12M1 8h4v4" fill="none" stroke="#333" /></svg></StatBtn>
          <StatBtn cls="w-[36px] bg-white border-[#3c87d9] justify-start pl-[3px] gap-[7px]">
            <span className="w-[13px] h-[13px] border border-[#3c87d9] relative block"><span className="absolute -left-[2px] -top-[2px] w-[4px] h-[4px] bg-[#f5a25a]" /></span><Caret /></StatBtn>
          <StatBtn cls={SB + "w-[25px]"}><svg width="14" height="14" viewBox="0 0 14 14"><path d="M0 0l14 14M14 0L0 14" stroke="#999" /></svg></StatBtn>
          <StatBtn cls={SB + "w-[36px] gap-[6px]"}><svg width="13" height="10" viewBox="0 0 13 10"><path d="M0 9.500h12M0 9.500L10 1" stroke="#333" fill="none" /></svg><Caret c="#777" /></StatBtn>
          <StatBtn cls={SB + "w-[36px] gap-[5px]"}><svg width="15" height="10" viewBox="0 0 15 10"><path d="M0 2h5M2.500 0v5" stroke="#333" /><rect x="5" y="6" width="10" height="4" fill="#333" /></svg><Caret c="#777" /></StatBtn>
          <StatBtn cls={SB + "w-[73px]"}>跨图层选择</StatBtn>
          <StatBtn cls={SB + "w-[60px]"}>折线选择</StatBtn>
        </div>
        <span className="ml-[4px]">按鼠标左键指定第一个角点，或拾取构件图元</span>
        <span className="absolute left-[1285px] tracking-[0.7px]">83.3333 FPS</span>
      </div>

      <BluePanel />
      <Dialog />

      {/* floating upload widget */}
      <div className="absolute left-[1155px] top-[28px] w-[103px] h-[25px] rounded-[4px] border border-[#3b8af2] bg-[#dbe8fb] flex items-center overflow-hidden">
        <div className="w-[30px] h-full bg-[#3b8af2] flex items-center justify-center shrink-0">
          <svg width="20" height="14" viewBox="0 0 20 14"><circle cx="10" cy="4.500" r="3.200" fill="none" stroke="#fff" strokeWidth="2.200" /><circle cx="5" cy="9.500" r="3.200" fill="none" stroke="#fff" strokeWidth="2.200" /><circle cx="15" cy="9.500" r="3.200" fill="none" stroke="#fff" strokeWidth="2.200" /></svg>
        </div>
        <span className="ml-[12px] text-[#8fb4ef]">拖拽上传</span>
      </div>
    </div>
  );
}
